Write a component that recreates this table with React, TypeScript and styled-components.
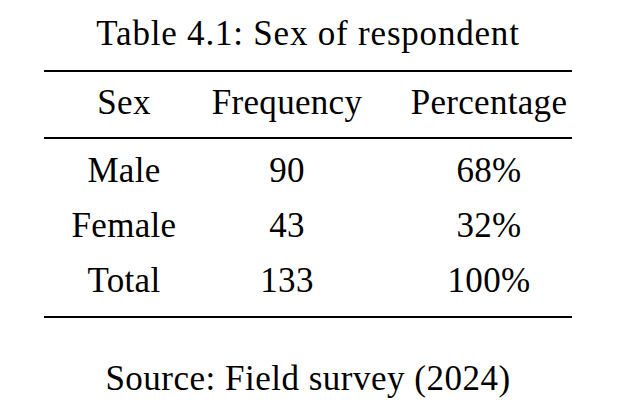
import styled, { createGlobalStyle } from "styled-components";

const GlobalStyle = createGlobalStyle`
    html, body {
        margin: 0;
        padding: 0;
        background: #ffffff;
    }
    body {
        font-family: "Liberation Serif", "Times New Roman", serif;
        color: #000000;
    }
`

const Page = styled.div`
    width: 528px;
    margin-left: 44px;
    padding-top: 14px;
    font-size: 35px;
    line-height: 40px;
    letter-spacing: 0.3px;
`

const Caption = styled.div`
    text-align: center;
    letter-spacing: 0.8px;
    margin-bottom: 16px;
`

const Rule = styled.div<{ $thick?: number }>`
    height: ${(p) => p.$thick ?? 2}px;
    background-color: #000000;
`

const Table = styled.div`
    display: grid;
    grid-template-columns: 160px 166px 202px;
`

const Row = styled.div<{ $top: number; $bottom: number }>`
    display: contents;

    > div {
        padding-top: ${(p) => p.$top}px;
        padding-bottom: ${(p) => p.$bottom}px;
    }
`

const Cell = styled.div<{ $shift?: number }>`
    text-align: center;
    padding-left: ${(p) => p.$shift ?? 0}px;
    white-space: nowrap;
`

const Source = styled.div`
    text-align: center;
    margin-top: 41px;
    letter-spacing: 0.5px;
`

const rows = [
    { sex: "Male", freq: "90", pct: "68%" },
    { sex: "Female", freq: "43", pct: "32%" },
    { sex: "Total", freq: "133", pct: "100%" },
]

export default function App() {
    return (
        <>
            <GlobalStyle />
            <Page>
                <Caption>Table 4.1: Sex of respondent</Caption>

                <Rule $thick={2} />
                <Table>
                    <Row $top={11} $bottom={14}>
                        <Cell>Sex</Cell>
                        <Cell>Frequency</Cell>
                        <Cell $shift={36}>Percentage</Cell>
                    </Row>
                </Table>
                <Rule $thick={2} />

                <Table>
                    {rows.map((r, i) => (
                        <Row
                            key={r.sex}
                            $top={i === 0 ? 12 : 15}
                            $bottom={i === rows.length - 1 ? 15 : 0}
                        >
                            <Cell>{r.sex}</Cell>
                            <Cell>{r.freq}</Cell>
                            <Cell $shift={36}>{r.pct}</Cell>
                        </Row>
                    ))}
                </Table>
                <Rule $thick={2} />

                <Source>Source: Field survey (2024)</Source>
            </Page>
        </>
    )
}
